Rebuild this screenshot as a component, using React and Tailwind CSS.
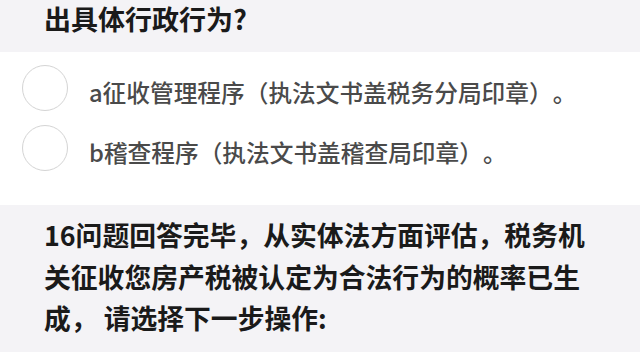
const options = [
    "a征收管理程序（执法文书盖税务分局印章）。",
    "b稽查程序（执法文书盖稽查局印章）。",
]

const App = () => {
    return (
        <div
            className="w-[640px] h-[360px] overflow-hidden bg-white [text-spacing-trim:space-all]"
            style={{ fontFamily: '"Noto Sans CJK SC", "Noto Sans", sans-serif' }}
        >
            <div className="h-[52px] bg-[#f4f3f6] pl-[44px] pt-[1px]">
                <h2 className="text-[27px] leading-[36px] font-bold text-[#1a1a1a]">
                    出具体行政行为?
                </h2>
            </div>

            <div className="h-[153px] bg-white pt-[13px] flex flex-col gap-[14px]">
                {options.map((label, index) => (
                    <div key={index} className="flex items-start h-[46px]">
                        <div className="ml-[22px] w-[46px] h-[46px] rounded-full border-[1.5px] border-[#d4d4d4] shrink-0" />
                        <span className="ml-[21px] mt-[10px] text-[23.7px] leading-[34px] font-medium text-[#4a4a4a] whitespace-nowrap">
                            {label}
                        </span>
                    </div>
                ))}
            </div>

            <div className="h-[147px] bg-[#f4f3f6] pl-[44px] pr-[40px] pt-[9px]">
                <p className="text-[26.8px] leading-[41.5px] font-bold text-[#1a1a1a]">
                    16问题回答完毕，从实体法方面评估，税务机关征收您房产税被认定为合法行为的概率已生成， 请选择下一步操作:
                </p>
            </div>

            <div className="h-[8px] bg-white" />
        </div>
    )
}

export default App
